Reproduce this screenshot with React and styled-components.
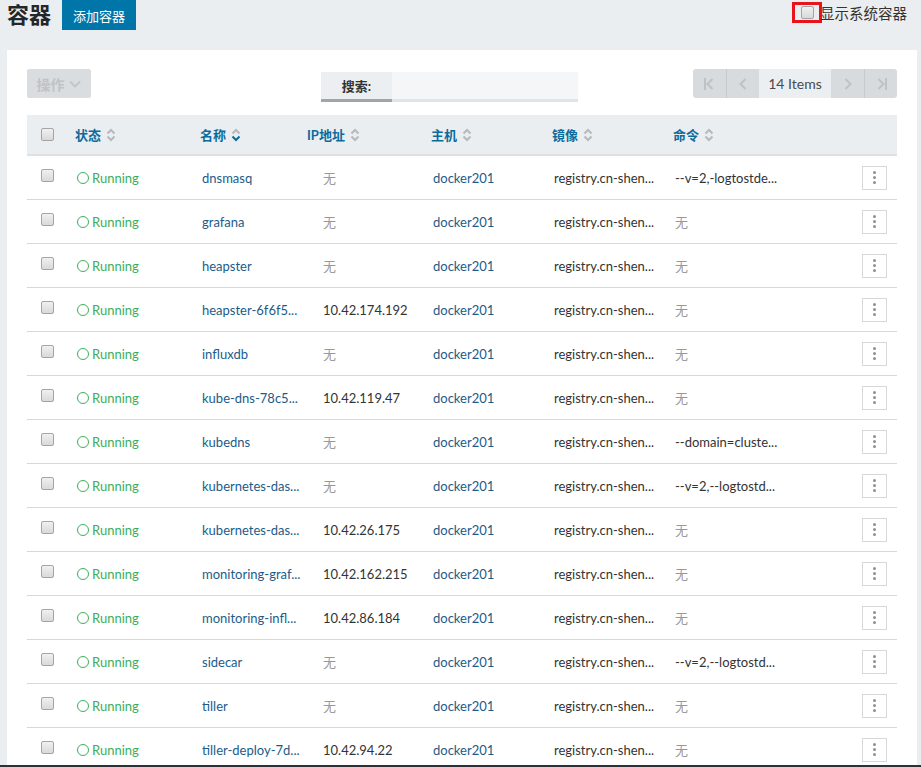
import React from "react";
import styled, { createGlobalStyle } from "styled-components";

const GlobalStyle = createGlobalStyle`
  html, body {
    margin: 0;
    padding: 0;
    background: #ebeef0;
    font-family: Lato, "Noto Sans CJK SC", sans-serif;
    font-size: 13px;
    color: #333333;
  }
  * {
    box-sizing: border-box;
  }
`;

const Page = styled.div`
  padding: 0 4px 0 7px;
`;

const TopBar = styled.div`
  display: flex;
  align-items: flex-start;
  height: 50px;
`;

const PageTitle = styled.h1`
  margin: 0;
  font-size: 22px;
  line-height: 30px;
  font-weight: 700;
  color: #23272a;
`;

const AddButton = styled.button`
  margin-left: 11px;
  height: 30px;
  padding: 0 11px;
  border: 0;
  background: #0075a8;
  color: #ffffff;
  font-family: inherit;
  font-size: 13px;
`;

const SystemToggle = styled.label`
  margin-left: auto;
  margin-right: 10px;
  display: flex;
  align-items: center;
  margin-top: 2px;
  font-size: 14.5px;
  color: #333;
`;

const Highlight = styled.span`
  display: flex;
  align-items: center;
  justify-content: center;
  width: 30px;
  height: 21px;
  border: 3px solid #e8131b;
  margin-right: -2px;
`;

const Check = styled.span`
  display: inline-block;
  width: 13px;
  height: 13px;
  border: 1px solid #a3a5a7;
  border-radius: 2px;
  background: linear-gradient(#f0f0f0, #d9d9d9);
`;

const Panel = styled.div`
  background: #ffffff;
  padding: 19px 20px 0 20px;
`;

const Toolbar = styled.div`
  display: flex;
  align-items: flex-start;
  height: 33px;
  margin-bottom: 13px;
`;

const ActionsButton = styled.div`
  width: 64px;
  height: 29px;
  border-radius: 2px;
  background: #dadddf;
  color: #bfc3c6;
  display: flex;
  align-items: center;
  justify-content: center;
  gap: 3px;
  font-size: 14px;
  font-weight: 700;
`;

const Search = styled.div`
  display: flex;
  margin-left: 230px;
  margin-top: 3px;
  height: 30px;
`;

const SearchLabel = styled.div`
  width: 71px;
  background: #eceff1;
  border-bottom: 3px solid #a2a4a6;
  display: flex;
  align-items: center;
  justify-content: center;
  font-weight: 700;
  font-size: 13px;
  color: #333;
`;

const SearchInput = styled.div`
  width: 186px;
  background: #f5f6f7;
  border-bottom: 3px solid #e2e4e6;
`;

const Pager = styled.div`
  margin-left: auto;
  display: flex;
  height: 29px;
  border-radius: 3px;
  overflow: hidden;
`;

const PagerBtn = styled.div`
  width: 33px;
  background: #d8dbdd;
  display: flex;
  align-items: center;
  justify-content: center;
  border-left: ${(p) => (p.$divider ? "1px solid #c8cbcd" : "0")};
`;

const PagerCount = styled.div`
  width: 72px;
  background: #eceff1;
  display: flex;
  align-items: center;
  justify-content: center;
  font-size: 14px;
  color: #4a4a4a;
`;

const cols = "46px 125px 107px 124px 121px 121px 1fr 50px";

const HeadRow = styled.div`
  display: grid;
  grid-template-columns: ${cols};
  height: 41px;
  background: #ebeef0;
  border-bottom: 2px solid #dde1e4;
  align-items: center;
`;

const HeadCell = styled.div`
  display: flex;
  align-items: center;
  gap: 5px;
  padding-left: 2px;
  font-weight: 700;
  font-size: 13px;
  color: #0c6b9b;
`;

const Row = styled.div`
  display: grid;
  grid-template-columns: ${cols};
  height: 44px;
  border-bottom: 1px solid #d3d8db;
  align-items: center;
`;

const Cell = styled.div`
  padding-left: ${(p) => p.$pad ?? 4}px;
  white-space: nowrap;
  color: ${(p) => p.$color || "#333"};
`;

const BoxCell = styled.div`
  display: flex;
  padding-left: 14px;
  margin-top: ${(p) => (p.$head ? 0 : -4)}px;
`;

const Status = styled.div`
  display: flex;
  align-items: center;
  gap: 3px;
  padding-left: 4px;
  color: #3cae5b;
`;

const Ring = styled.span`
  width: 12px;
  height: 12px;
  border: 1px solid #3cae5b;
  border-radius: 50%;
`;

const MenuCell = styled.div`
  display: flex;
  justify-content: flex-end;
  padding-right: 10px;
`;

const MenuButton = styled.div`
  width: 25px;
  height: 24px;
  border: 1px solid #d6d9db;
  display: flex;
  flex-direction: column;
  align-items: center;
  justify-content: center;
  gap: 2px;
`;

const Dot = styled.span`
  width: 3px;
  height: 3px;
  background: #8d9093;
  border-radius: 50%;
`;

const BottomEdge = styled.div`
  position: fixed;
  left: 0;
  right: 0;
  bottom: 0;
  height: 2px;
  background: #2c3136;
`;

const SortIcon = ({ active }) => (
  <svg width="10" height="14" viewBox="0 0 10 14">
    <path d="M1.5 5.5 L5 2 L8.5 5.5" fill="none" stroke="#b6b9bc" strokeWidth="2" />
    <path
      d="M1.5 8.5 L5 12 L8.5 8.5"
      fill="none"
      stroke={active ? "#0c6b9b" : "#b6b9bc"}
      strokeWidth="2"
    />
  </svg>
);

const Chevron = ({ dir, bar }) => (
  <svg width="16" height="16" viewBox="0 0 16 16">
    {dir === "left" ? (
      <path d="M10.5 3 L5.5 8 L10.5 13" fill="none" stroke="#bfc2c4" strokeWidth="2" />
    ) : (
      <path d="M5.5 3 L10.5 8 L5.5 13" fill="none" stroke="#bfc2c4" strokeWidth="2" />
    )}
    {bar && dir === "left" && <path d="M3 2 V14" stroke="#bfc2c4" strokeWidth="2" />}
    {bar && dir === "right" && <path d="M13 2 V14" stroke="#bfc2c4" strokeWidth="2" />}
  </svg>
);

const rows = [
  ["dnsmasq", "", "--v=2,-logtostde..."],
  ["grafana", "", ""],
  ["heapster", "", ""],
  ["heapster-6f6f5...", "10.42.174.192", ""],
  ["influxdb", "", ""],
  ["kube-dns-78c5...", "10.42.119.47", ""],
  ["kubedns", "", "--domain=cluste..."],
  ["kubernetes-das...", "", "--v=2,--logtostd..."],
  ["kubernetes-das...", "10.42.26.175", ""],
  ["monitoring-graf...", "10.42.162.215", ""],
  ["monitoring-infl...", "10.42.86.184", ""],
  ["sidecar", "", "--v=2,--logtostd..."],
  ["tiller", "", ""],
  ["tiller-deploy-7d...", "10.42.94.22", ""],
];

const Empty = styled.span`
  color: #9a9a9a;
`;

export default function App() {
  return (
    <>
      <GlobalStyle />
      <Page>
        <TopBar>
          <PageTitle>容器</PageTitle>
          <AddButton>添加容器</AddButton>
          <SystemToggle>
            <Highlight>
              <Check />
            </Highlight>
            显示系统容器
          </SystemToggle>
        </TopBar>
        <Panel>
          <Toolbar>
            <ActionsButton>
              操作
              <svg width="14" height="10" viewBox="0 0 14 10">
                <path d="M2 2.5 L7 7.5 L12 2.5" fill="none" stroke="#c3c7ca" strokeWidth="2.2" />
              </svg>
            </ActionsButton>
            <Search>
              <SearchLabel>搜索:</SearchLabel>
              <SearchInput />
            </Search>
            <Pager>
              <PagerBtn>
                <Chevron dir="left" bar />
              </PagerBtn>
              <PagerBtn $divider>
                <Chevron dir="left" />
              </PagerBtn>
              <PagerCount>14 Items</PagerCount>
              <PagerBtn>
                <Chevron dir="right" />
              </PagerBtn>
              <PagerBtn $divider>
                <Chevron dir="right" bar />
              </PagerBtn>
            </Pager>
          </Toolbar>
          <HeadRow>
            <BoxCell $head>
              <Check />
            </BoxCell>
            <HeadCell>
              状态 <SortIcon />
            </HeadCell>
            <HeadCell>
              名称 <SortIcon active />
            </HeadCell>
            <HeadCell>
              IP地址 <SortIcon />
            </HeadCell>
            <HeadCell>
              主机 <SortIcon />
            </HeadCell>
            <HeadCell>
              镜像 <SortIcon />
            </HeadCell>
            <HeadCell>
              命令 <SortIcon />
            </HeadCell>
            <div />
          </HeadRow>
          {rows.map(([name, ip, cmd], i) => (
            <Row key={i}>
              <BoxCell>
                <Check />
              </BoxCell>
              <Status>
                <Ring />
                Running
              </Status>
              <Cell $color="#1b5c8a">{name}</Cell>
              <Cell $pad={18}>{ip || <Empty>无</Empty>}</Cell>
              <Cell $color="#1b5c8a">docker201</Cell>
              <Cell>registry.cn-shen...</Cell>
              <Cell>{cmd || <Empty>无</Empty>}</Cell>
              <MenuCell>
                <MenuButton>
                  <Dot />
                  <Dot />
                  <Dot />
                </MenuButton>
              </MenuCell>
            </Row>
          ))}
        </Panel>
      </Page>
      <BottomEdge />
    </>
  );
}
